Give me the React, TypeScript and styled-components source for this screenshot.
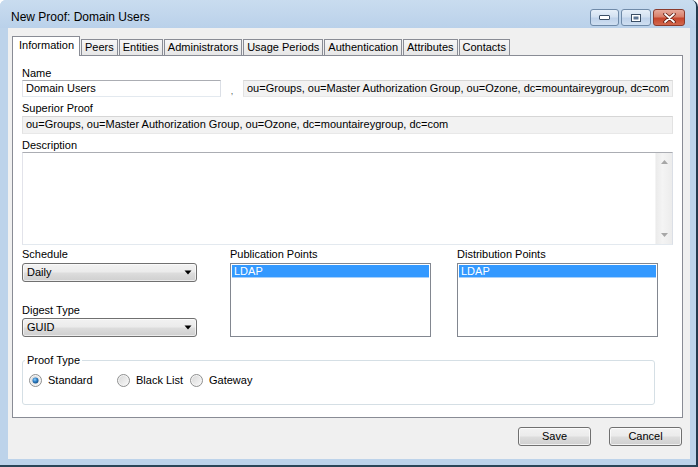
import React from 'react';
import styled, { createGlobalStyle, css } from 'styled-components';

const Global = createGlobalStyle`
  html, body { margin: 0; padding: 0; background: #ffffff; }
  body {
    font-family: "Liberation Sans", Arial, sans-serif;
    font-size: 11px;
    color: #000;
  }
  * { box-sizing: border-box; }
`;

const Window = styled.div`
  width: 698px;
  height: 467px;
  display: flex;
  flex-direction: column;
  background: #bdd3ea;
  border-right: 2px solid #243a4e;
  border-bottom: 2px solid #2c4658;
  border-top-left-radius: 6px;
  border-top-right-radius: 7px;
  overflow: hidden;
`;

const TitleBar = styled.div`
  height: 28px;
  flex: none;
  display: flex;
  align-items: flex-start;
  padding: 0 11px 0 11px;
  background: linear-gradient(#c9dcef, #bad1ea);
`;

const Title = styled.div`
  font-size: 12px;
  line-height: 14px;
  padding-top: 10px;
  flex: 1;
  color: #000;
`;

const CaptionGroup = styled.div`
  display: flex;
  gap: 2px;
  margin-top: 9px;
`;

const CaptionButton = styled.div<{ $w: number; $close?: boolean }>`
  width: ${(p) => p.$w}px;
  height: 17px;
  border-radius: 3px;
  border: 1px solid ${(p) => (p.$close ? '#8b3a2c' : '#6f8aa8')};
  display: flex;
  align-items: center;
  justify-content: center;
  ${(p) =>
    p.$close
      ? css`
          background: linear-gradient(#e6a99b 0%, #d9806b 45%, #c6452c 55%, #d2694f 100%);
        `
      : css`
          background: linear-gradient(#e6eff9 0%, #d3e1f1 45%, #bfd2ea 55%, #cfdff1 100%);
        `}
`;

const Client = styled.div`
  flex: 1;
  margin: 0 6px 6px 8px;
  background: #f0f0f0;
  padding: 8px 7px 0 4px;
  display: flex;
  flex-direction: column;
`;

const TabStrip = styled.div`
  height: 19px;
  display: flex;
  align-items: flex-end;
  position: relative;
  z-index: 1;
`;

const Tab = styled.div<{ $active?: boolean }>`
  border: 1px solid #898c95;
  border-bottom: none;
  padding: 0 3px;
  white-space: nowrap;
  margin-left: 1px;
  ${(p) =>
    p.$active
      ? css`
          height: 20px;
          margin-left: 0;
          margin-bottom: -1px;
          background: #ffffff;
          line-height: 17px;
          padding: 0 5px 0 6px;
        `
      : css`
          height: 16px;
          line-height: 15px;
          background: linear-gradient(#f7f7f7, #e6e6e6);
        `}
`;

const Panel = styled.div`
  height: 363px;
  border: 1px solid #898c95;
  background: #ffffff;
  padding: 11px 9px 0 9px;
  display: flex;
  flex-direction: column;
`;

const Label = styled.div<{ $mt?: number }>`
  height: 13px;
  line-height: 13px;
  margin-top: ${(p) => p.$mt ?? 0}px;
  white-space: nowrap;
`;

const NameRow = styled.div`
  display: flex;
  align-items: flex-start;
  height: 17px;
`;

const TextField = styled.div<{ $w?: number; $readonly?: boolean; $h?: number }>`
  height: ${(p) => p.$h ?? 17}px;
  ${(p) => (p.$w ? `width: ${p.$w}px;` : 'flex: 1;')}
  border: 1px solid;
  border-color: ${(p) =>
    p.$readonly ? '#d6d6d6 #e2e2e2 #e8e8e8 #e2e2e2' : '#abadb3 #dbdfe6 #e3e9ef #e2e3ea'};
  background: ${(p) => (p.$readonly ? '#f2f2f2' : '#ffffff')};
  padding: 0 2px 0 3px;
  line-height: 15px;
  white-space: nowrap;
  overflow: hidden;
`;

const Comma = styled.div`
  width: 22px;
  text-align: center;
  font-size: 9px;
  line-height: 14px;
  padding-top: 4px;
  color: #555;
`;

const TextArea = styled.div`
  margin-top: 0;
  height: 93px;
  border: 1px solid;
  border-color: #abadb3 #dbdfe6 #e3e9ef #e2e3ea;
  background: #fff;
  display: flex;
  justify-content: flex-end;
`;

const ScrollBar = styled.div`
  width: 17px;
  background: linear-gradient(90deg, #ebebeb, #f4f4f4 40%, #ececec);
  border-left: 1px solid #f4f4f4;
  display: flex;
  flex-direction: column;
  justify-content: space-between;
  align-items: center;
  padding: 7px 0 7px 0;
`;

const Lower = styled.div`
  margin-top: 3px;
  display: grid;
  grid-template-columns: 208px 227px 201px;
`;

const Column = styled.div`
  display: flex;
  flex-direction: column;
`;

const Combo = styled.div<{ $mt?: number }>`
  margin-top: ${(p) => p.$mt ?? 0}px;
  width: 175px;
  height: 19px;
  border: 1px solid #707070;
  border-radius: 3px;
  background: linear-gradient(#f2f2f2 0%, #ebebeb 48%, #dddddd 52%, #cfcfcf 100%);
  display: flex;
  align-items: center;
  padding: 0 4px 0 4px;
  box-shadow: inset 0 0 0 1px rgba(255, 255, 255, 0.6);
`;

const ComboText = styled.div`
  flex: 1;
  line-height: 15px;
`;

const ListBox = styled.div`
  margin-top: 2px;
  width: 201px;
  height: 74px;
  border: 1px solid #828790;
  background: #fff;
  padding: 1px;
`;

const ListItem = styled.div<{ $selected?: boolean }>`
  height: 12px;
  line-height: 12px;
  padding-left: 2px;
  ${(p) =>
    p.$selected &&
    css`
      background: #3399ff;
      color: #fff;
      border-bottom: 1px solid #a7d0fb;
      height: 13px;
    `}
`;

const Group = styled.fieldset`
  margin: 17px 0 0 0;
  width: 633px;
  height: 51px;
  border: 1px solid #d5dfe5;
  border-radius: 3px;
  padding: 0 6px;
`;

const Legend = styled.legend`
  padding: 0 2px;
  margin-left: -4px;
  line-height: 13px;
  height: 13px;
`;

const RadioRow = styled.div`
  display: flex;
  margin-top: 7px;
  height: 13px;
`;

const RadioItem = styled.div<{ $w?: number }>`
  display: flex;
  align-items: center;
  gap: 6px;
  ${(p) => (p.$w ? `width: ${p.$w}px;` : '')}
  line-height: 13px;
`;

const ButtonRow = styled.div`
  margin-top: 9px;
  margin-right: 1px;
  display: flex;
  justify-content: flex-end;
  gap: 18px;
`;

const Button = styled.div`
  width: 73px;
  height: 19px;
  border: 1px solid #707070;
  border-radius: 3px;
  background: linear-gradient(#f2f2f2 0%, #ebebeb 48%, #dddddd 52%, #cfcfcf 100%);
  box-shadow: inset 0 0 0 1px rgba(255, 255, 255, 0.7);
  text-align: center;
  line-height: 17px;
`;

const Radio: React.FC<{ checked?: boolean }> = ({ checked }) => (
  <svg width="13" height="13" viewBox="0 0 13 13">
    <defs>
      <linearGradient id={checked ? 'rgc' : 'rgu'} x1="0" y1="0" x2="1" y2="1">
        <stop offset="0" stopColor="#d9d9d9" />
        <stop offset="1" stopColor="#f7f7f7" />
      </linearGradient>
      <radialGradient id="dot" cx="0.4" cy="0.35" r="0.7">
        <stop offset="0" stopColor="#8ed0ff" />
        <stop offset="0.5" stopColor="#2f7fc4" />
        <stop offset="1" stopColor="#124b80" />
      </radialGradient>
    </defs>
    <circle cx="6.5" cy="6.5" r="6" fill="#f4f4f4" stroke="#8e8f8f" strokeWidth="1" />
    <circle cx="6.5" cy="6.5" r="4.5" fill={`url(#${checked ? 'rgc' : 'rgu'})`} />
    {checked && <circle cx="6.5" cy="6.5" r="3" fill="url(#dot)" />}
  </svg>
);

const ComboArrow = () => (
  <svg width="8" height="5" viewBox="0 0 8 5">
    <path d="M0.5 0.5 L7.5 0.5 L4 4.5 Z" fill="#000" />
  </svg>
);

export default function App() {
  return (
    <>
      <Global />
      <Window>
        <TitleBar>
          <Title>New Proof: Domain Users</Title>
          <CaptionGroup>
            <CaptionButton $w={29}>
              <svg width="11" height="5" viewBox="0 0 11 5">
                <rect x="0.5" y="0.5" width="10" height="4" rx="0.5" fill="#fff" stroke="#3b4f66" />
              </svg>
            </CaptionButton>
            <CaptionButton $w={30}>
              <svg width="10" height="8" viewBox="0 0 10 8">
                <rect x="0.5" y="0.5" width="9" height="7" fill="#fff" stroke="#3b4f66" />
                <rect x="2.5" y="2.5" width="5" height="3" fill="#5d7694" />
              </svg>
            </CaptionButton>
            <CaptionButton $w={32} $close>
              <svg width="13" height="10" viewBox="0 0 13 10">
                <path
                  d="M2 1 L11 9 M11 1 L2 9"
                  stroke="#5a1a10"
                  strokeWidth="3.4"
                  strokeLinecap="round"
                  fill="none"
                />
                <path d="M2 1 L11 9 M11 1 L2 9" stroke="#fff" strokeWidth="1.8" strokeLinecap="round" fill="none" />
              </svg>
            </CaptionButton>
          </CaptionGroup>
        </TitleBar>
        <Client>
          <TabStrip>
            <Tab $active>Information</Tab>
            <Tab>Peers</Tab>
            <Tab>Entities</Tab>
            <Tab>Administrators</Tab>
            <Tab>Usage Periods</Tab>
            <Tab>Authentication</Tab>
            <Tab>Attributes</Tab>
            <Tab>Contacts</Tab>
          </TabStrip>
          <Panel>
            <Label>Name</Label>
            <NameRow>
              <TextField $w={199}>Domain Users</TextField>
              <Comma>,</Comma>
              <TextField $readonly>
                ou=Groups, ou=Master Authorization Group, ou=Ozone, dc=mountaireygroup, dc=com
              </TextField>
            </NameRow>
            <Label $mt={5}>Superior Proof</Label>
            <TextField $readonly $h={18} style={{ flex: 'none', marginTop: 1 }}>
              ou=Groups, ou=Master Authorization Group, ou=Ozone, dc=mountaireygroup, dc=com
            </TextField>
            <Label $mt={5}>Description</Label>
            <TextArea>
              <ScrollBar>
                <svg width="7" height="4" viewBox="0 0 7 4">
                  <path d="M0 4 L3.5 0 L7 4 Z" fill="#a7a7a7" />
                </svg>
                <svg width="7" height="4" viewBox="0 0 7 4">
                  <path d="M0 0 L3.5 4 L7 0 Z" fill="#a7a7a7" />
                </svg>
              </ScrollBar>
            </TextArea>
            <Lower>
              <Column>
                <Label>Schedule</Label>
                <Combo $mt={2}>
                  <ComboText>Daily</ComboText>
                  <ComboArrow />
                </Combo>
                <Label $mt={22}>Digest Type</Label>
                <Combo $mt={1}>
                  <ComboText>GUID</ComboText>
                  <ComboArrow />
                </Combo>
              </Column>
              <Column>
                <Label>Publication Points</Label>
                <ListBox>
                  <ListItem $selected>LDAP</ListItem>
                </ListBox>
              </Column>
              <Column>
                <Label>Distribution Points</Label>
                <ListBox>
                  <ListItem $selected>LDAP</ListItem>
                </ListBox>
              </Column>
            </Lower>
            <Group>
              <Legend>Proof Type</Legend>
              <RadioRow>
                <RadioItem $w={88}>
                  <Radio checked />
                  <span>Standard</span>
                </RadioItem>
                <RadioItem $w={73}>
                  <Radio />
                  <span>Black List</span>
                </RadioItem>
                <RadioItem>
                  <Radio />
                  <span>Gateway</span>
                </RadioItem>
              </RadioRow>
            </Group>
          </Panel>
          <ButtonRow>
            <Button>Save</Button>
            <Button>Cancel</Button>
          </ButtonRow>
        </Client>
      </Window>
    </>
  );
}
